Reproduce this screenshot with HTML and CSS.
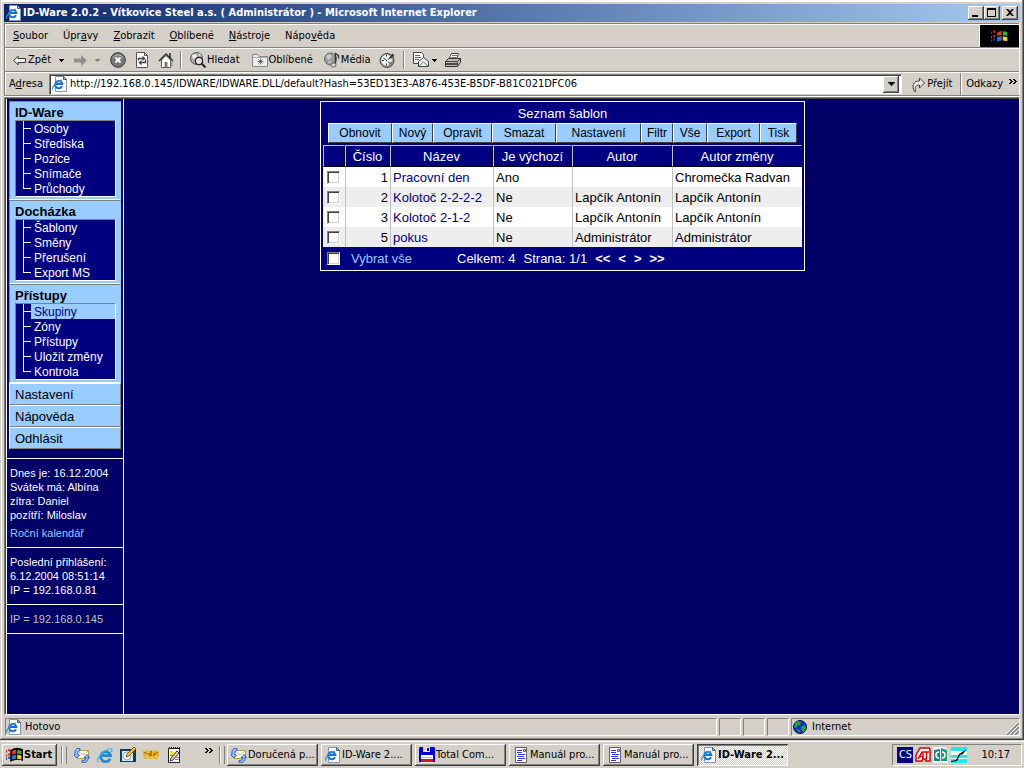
FILE: index.html
```html
<!DOCTYPE html>
<html lang="cs">
<head>
    <meta charset="UTF-8">
    <meta name="viewport" content="width=device-width, initial-scale=1.0">
    <title>ID-Ware 2.0.2 - Vítkovice Steel a.s. ( Administrátor )</title>
    <link rel="stylesheet" href="styles.css">
</head>
<body>
    <!-- Shared icons -->
    <svg class="sprite" aria-hidden="true">
        <symbol id="ie" viewBox="0 0 16 16">
            <path d="M3.500.5h8l3 3v12h-11z" fill="#fff" stroke="#8494b4"/>
            <path d="M11.500.5v3h3z" fill="#c8d4e8" stroke="#4a5a7a"/>
            <path d="M10 10.200A3.600 3.600 0 1 1 10.300 8H3.500" fill="none" stroke="#1c6fd4" stroke-width="2"/>
            <path d="M1 13C-1 14 2 6.500 10 4" fill="none" stroke="#2a8fe0" stroke-width="1.200"/>
        </symbol>
        <symbol id="ie-big" viewBox="0 0 16 16">
            <path d="M13.200 11.700A5 5 0 1 1 13.500 8.600H4" fill="none" stroke="#2289d2" stroke-width="2.800"/>
            <path d="M1.500 15C-2 15 3 5 11.500 2 16 .5 15.500 3 14 5" fill="none" stroke="#49b5ee" stroke-width="1.300"/>
        </symbol>
        <symbol id="outlook" viewBox="0 0 16 16">
            <path d="M3.500 3.500h11v8h-11z" fill="#fff" stroke="#c09850"/>
            <path d="M4 4l5 4 5-4" fill="none" stroke="#e0b060"/>
            <path d="M6 1.500C2 1 .5 3 1 7.500L0 8l3 3 2.500-3H4C3.500 5 4 3.500 6 3.500z" fill="#8fc7ff" stroke="#1b3fc8" stroke-width=".8"/>
            <path d="M8 15.500c5 .5 6.500-2 6-5h1.500L13 7.500l-3 3h2c0 2-1 3-4 3z" fill="#8fc7ff" stroke="#1b3fc8" stroke-width=".8"/>
        </symbol>
        <symbol id="doc" viewBox="0 0 16 16">
            <path d="M2.500.5h11v15h-11z" fill="#fff" stroke="#606060"/>
            <path d="M10.500 2.500h2v2h-2z" fill="#ddd" stroke="#606060"/>
            <path d="M4 3h5v1H4zM4 5h5v1H4zM5 7h7v1H5zM4 9h7v1H4zM5 11h7v1H5zM4 13h5v1H4z" fill="#3030e8"/>
        </symbol>
        <symbol id="flag" viewBox="0 0 16 14">
            <path d="M0 3h1v2H0zM0 7h1v2H0zM2 2h2v2H2zM2 6h2v2H2z" fill="#d02020"/>
            <path d="M0 10h1v2H0zM2 9h2v2H2z" fill="#2040c0"/>
            <path d="M4 3c4-3 8-3 12-1v11c-4-2-8-1-12 1z" fill="#000"/>
            <path d="M5.500 4q2-1.500 4-1.400v3.600q-2 0-4 1z" fill="#f03020"/>
            <path d="M10.500 2.700q2 0 4 .8v3.700q-2-.8-4-1z" fill="#30b030"/>
            <path d="M5.500 8.200q2-1 4-1v3.800q-2 0-4 1z" fill="#3070e0"/>
            <path d="M10.500 7.200q2 .2 4 1v3.500q-2-.7-4-.8z" fill="#f8d020"/>
        </symbol>
        <symbol id="caret" viewBox="0 0 5 3">
            <path d="M0 0h5v1H4v1H3v1H2V2H1V1H0z" fill="currentColor"/>
        </symbol>
        <symbol id="chevrons" viewBox="0 0 8 5">
            <path d="M0 0h2v1h1v1h1v1H3v1H2v1H0V4h1V3h1V2H1V1H0zM4 0h2v1h1v1h1v1H7v1H6v1H4V4h1V3h1V2H5V1H4z" fill="#000"/>
        </symbol>
    </svg>

    <div class="window">
        <header class="titlebar">
            <svg class="icon"><use href="#ie"/></svg>
            <h1>ID-Ware 2.0.2 - Vítkovice Steel a.s. ( Administrátor ) - Microsoft Internet Explorer</h1>
            <button class="win-btn" aria-label="Minimalizovat"><svg viewBox="0 0 12 10"><path d="M2 7h6v2H2z"/></svg></button>
            <button class="win-btn" aria-label="Maximalizovat"><svg viewBox="0 0 12 10"><path d="M1 0h9v9H1zM2 2v6h7V2z" fill-rule="evenodd"/></svg></button>
            <button class="win-btn win-close" aria-label="Zavřít"><svg viewBox="0 0 12 10"><path d="M2 1h2l2 2 2-2h2L7 4.500 10 8H8L6 6 4 8H2l3-3.500z"/></svg></button>
        </header>

        <div class="rebar">
            <div class="bar menubar">
                <nav class="menu">
                    <button><u>S</u>oubor</button>
                    <button>Úpr<u>a</u>vy</button>
                    <button><u>Z</u>obrazit</button>
                    <button><u>O</u>blíbené</button>
                    <button><u>N</u>ástroje</button>
                    <button>Nápo<u>v</u>ěda</button>
                </nav>
                <div class="throbber"><svg width="18" height="16"><use href="#flag"/></svg></div>
            </div>

            <div class="bar toolbar">
                <button class="tool back">
                    <svg width="13" height="11" viewBox="0 0 13 11"><path d="M.7 5.500L5 1.200v2.300h7.500v4H5v2.300z" fill="#eee" stroke="#333"/></svg>
                    Zpět
                </button>
                <button class="tool drop" aria-label="Historie zpět"><svg class="caret"><use href="#caret"/></svg></button>
                <button class="tool" aria-label="Vpřed">
                    <svg width="13" height="11" viewBox="0 0 13 11"><path d="M0 3.500h7V0l6 5.500L7 11V7.500H0z" fill="#909090"/></svg>
                </button>
                <button class="tool drop off" aria-label="Historie vpřed"><svg class="caret"><use href="#caret"/></svg></button>
                <button class="tool" aria-label="Zastavit">
                    <svg class="icon" viewBox="0 0 16 16"><circle cx="8" cy="8" r="7.300" fill="#777" stroke="#333"/><path d="M3 6a5.500 5.500 0 0 1 10 0" fill="none" stroke="#bbb"/><path d="M5.500 5.500l5 5m0-5l-5 5" stroke="#fff" stroke-width="1.800"/></svg>
                </button>
                <button class="tool" aria-label="Aktualizovat">
                    <svg class="icon" viewBox="0 0 16 16"><path d="M2.500.5h8l3 3v12h-11z" fill="#fff" stroke="#555"/><path d="M10.500.5v3h3" fill="none" stroke="#555"/><path d="M4.500 8.500V6.500h5M11.500 7.500v3h-5" fill="none" stroke="#444" stroke-width="1.400"/><path d="M8.500 3.500l3 3-3 2.500zM7.500 8l-3 2.500 3 3z" fill="#444"/></svg>
                </button>
                <button class="tool" aria-label="Domů">
                    <svg class="icon" viewBox="0 0 16 16"><path d="M11 1h2v5h-2z" fill="#555"/><path d="M3.500 8v7.500h9V8L8 3.500z" fill="#fff" stroke="#555"/><path d="M1 9l7-7 7 7" fill="none" stroke="#333" stroke-width="1.500"/><path d="M6.500 10h3v5.500h-3z" fill="#777"/><path d="M12.500 9l2 1v4l-2 1.500z" fill="#999"/></svg>
                </button>
                <span class="sep"></span>
                <button class="tool">
                    <svg class="icon" viewBox="0 0 16 16"><circle cx="6.500" cy="6.500" r="6" fill="#a8a8a8" stroke="#555"/><path d="M2 3l4-1 1 3-4 2zM8 1l3 2-1 2" fill="#eee"/><circle cx="9" cy="9" r="3.600" fill="#e4e4e4" stroke="#222" stroke-width="1.300"/><path d="M11.500 11.500l4 4" stroke="#222" stroke-width="2"/></svg>
                    Hledat
                </button>
                <button class="tool favs">
                    <svg class="icon" viewBox="0 0 16 16"><path d="M.5 14.500v-12h5l1.500 2h8.500v10z" fill="#eee" stroke="#888"/><path d="M1 5.500h14" stroke="#aaa"/><path d="M8.500 6.500v6M5.500 9.500h6M6.500 7.500l4 4M10.500 7.500l-4 4" stroke="#555" stroke-width=".8"/></svg>
                    Oblíbené
                </button>
                <button class="tool">
                    <svg class="icon" viewBox="0 0 16 16"><circle cx="6.500" cy="7" r="6" fill="#9a9a9a" stroke="#666"/><path d="M2 4l4-2 2 3-4 3zM4 9l3 0-1 3z" fill="#ccc"/><path d="M11.500 12V1.500l3 2v3" fill="none" stroke="#333" stroke-width="1.300"/><ellipse cx="9.500" cy="13" rx="2.500" ry="2" fill="#ddd" stroke="#666"/></svg>
                    Média
                </button>
                <button class="tool history" aria-label="Historie">
                    <svg class="icon" viewBox="0 0 16 16"><circle cx="8" cy="8.500" r="7" fill="#999" stroke="#444"/><circle cx="7.500" cy="8" r="5.200" fill="#f4f4f4"/><path d="M8 8.500l5.500-7L15.500 4z" fill="#333"/><path d="M8 9l6 2-2 3z" fill="#777"/><path d="M8 9L4.500 6M7.500 3v1.500M3 8.500h2M7.500 11.500v1.500" stroke="#333"/></svg>
                </button>
                <span class="sep"></span>
                <button class="tool mail" aria-label="Pošta">
                    <svg class="icon" viewBox="0 0 16 16"><path d="M.5.5h8l2 2v9H.5z" fill="#fff" stroke="#444"/><path d="M2 3.500h5M2 5.500h6M2 7.500h4" stroke="#666"/><path d="M5.500 14.500V9.500l5-4 5 4v5z" fill="#f0f0f0" stroke="#444"/><path d="M6 14l4.500-4 4.500 4" fill="none" stroke="#777"/></svg>
                    <svg class="caret"><use href="#caret"/></svg>
                </button>
                <button class="tool" aria-label="Tisk">
                    <svg class="icon" viewBox="0 0 16 16"><path d="M4 7L6.500 1.500h7L11.500 7" fill="#fff" stroke="#444"/><path d="M7 3.500h5M6 5.500h5" stroke="#777"/><path d="M.5 9.500l3-3h12v4l-3 4H.5z" fill="#bbb" stroke="#333"/><path d="M1 9.500h11.500l3-3M12.500 9.500v5" fill="none" stroke="#444"/><path d="M1 12h11" stroke="#222" stroke-width="1.500"/></svg>
                </button>
            </div>

            <div class="bar addressbar">
                <label for="address">A<u>d</u>resa</label>
                <div class="combo">
                    <svg class="icon"><use href="#ie"/></svg>
                    <input id="address" type="text" value="http://192.168.0.145/IDWARE/IDWARE.DLL/default?Hash=53ED13E3-A876-453E-B5DF-B81C021DFC06">
                    <button class="combo-btn" aria-label="Rozbalit"><svg width="7" height="4"><use href="#caret"/></svg></button>
                </div>
                <button class="tool go">
                    <svg width="13" height="15" viewBox="0 0 13 15"><path d="M2.500 14.500C-.5 9 1 4 7.500 4V1l5 5-5 5V8C4 8 2.500 10 3.500 14.500z" fill="#e8e8e8" stroke="#444"/></svg>
                    Přejít
                </button>
                <span class="bar-split"></span>
                <button class="tool links">Odkazy <svg width="8" height="5"><use href="#chevrons"/></svg></button>
            </div>
        </div>

        <div class="view">
            <aside class="sidebar">
                <nav class="groups">
                    <section class="group">
                        <h2>ID-Ware</h2>
                        <ul>
                            <li><a href="#">Osoby</a></li>
                            <li><a href="#">Střediska</a></li>
                            <li><a href="#">Pozice</a></li>
                            <li><a href="#">Snímače</a></li>
                            <li><a href="#">Průchody</a></li>
                        </ul>
                    </section>
                    <section class="group">
                        <h2>Docházka</h2>
                        <ul>
                            <li><a href="#">Šablony</a></li>
                            <li><a href="#">Směny</a></li>
                            <li><a href="#">Přerušení</a></li>
                            <li><a href="#">Export MS</a></li>
                        </ul>
                    </section>
                    <section class="group">
                        <h2>Přístupy</h2>
                        <ul>
                            <li><a href="#" class="active">Skupiny</a></li>
                            <li><a href="#">Zóny</a></li>
                            <li><a href="#">Přístupy</a></li>
                            <li><a href="#">Uložit změny</a></li>
                            <li><a href="#">Kontrola</a></li>
                        </ul>
                    </section>
                    <a href="#" class="nav-btn">Nastavení</a>
                    <a href="#" class="nav-btn">Nápověda</a>
                    <a href="#" class="nav-btn">Odhlásit</a>
                </nav>
                <div class="info">
                    <p>Dnes je: 16.12.2004</p>
                    <p>Svátek má: Albína</p>
                    <p>zítra: Daniel</p>
                    <p>pozítří: Miloslav</p>
                    <a href="#">Roční kalendář</a>
                </div>
                <div class="info">
                    <p>Poslední přihlášení:</p>
                    <p>6.12.2004 08:51:14</p>
                    <p>IP = 192.168.0.81</p>
                </div>
                <div class="info info-ip">
                    <p>IP = 192.168.0.145</p>
                </div>
            </aside>

            <main class="content">
                <form class="panel">
                    <h2>Seznam šablon</h2>
                    <div class="actions">
                        <button type="button">Obnovit</button>
                        <button type="button">Nový</button>
                        <button type="button">Opravit</button>
                        <button type="button">Smazat</button>
                        <button type="button">Nastavení</button>
                        <button type="button">Filtr</button>
                        <button type="button">Vše</button>
                        <button type="button">Export</button>
                        <button type="button">Tisk</button>
                    </div>
                    <table>
                        <colgroup>
                            <col class="c-check"><col class="c-num"><col class="c-name"><col class="c-default"><col class="c-author"><col class="c-changed">
                        </colgroup>
                        <thead>
                            <tr><th></th><th>Číslo</th><th>Název</th><th>Je výchozí</th><th>Autor</th><th>Autor změny</th></tr>
                        </thead>
                        <tbody>
                            <tr><td><input type="checkbox" aria-label="Pracovní den"></td><td class="num">1</td><td><a href="#">Pracovní den</a></td><td>Ano</td><td></td><td>Chromečka Radvan</td></tr>
                            <tr><td><input type="checkbox" aria-label="Kolotoč 2-2-2-2"></td><td class="num">2</td><td><a href="#">Kolotoč 2-2-2-2</a></td><td>Ne</td><td>Lapčík Antonín</td><td>Lapčík Antonín</td></tr>
                            <tr><td><input type="checkbox" aria-label="Kolotoč 2-1-2"></td><td class="num">3</td><td><a href="#">Kolotoč 2-1-2</a></td><td>Ne</td><td>Lapčík Antonín</td><td>Lapčík Antonín</td></tr>
                            <tr><td><input type="checkbox" aria-label="pokus"></td><td class="num">5</td><td><a href="#">pokus</a></td><td>Ne</td><td>Administrátor</td><td>Administrátor</td></tr>
                        </tbody>
                    </table>
                    <div class="panel-foot">
                        <input type="checkbox" id="all">
                        <label for="all">Vybrat vše</label>
                        <div class="pager">
                            <span>Celkem: 4</span>
                            <span>Strana: 1/1</span>
                            <a href="#">&lt;&lt;</a>
                            <a href="#">&lt;</a>
                            <a href="#">&gt;</a>
                            <a href="#">&gt;&gt;</a>
                        </div>
                    </div>
                </form>
            </main>
        </div>

        <footer class="statusbar">
            <div class="cell cell-main"><svg class="icon"><use href="#ie"/></svg>Hotovo</div>
            <div class="cell"></div>
            <div class="cell"></div>
            <div class="cell"></div>
            <div class="cell cell-zone">
                <svg width="14" height="14" viewBox="0 0 14 14"><circle cx="7" cy="7" r="6.500" fill="#1432c0" stroke="#001050"/><path d="M2 3l3-2 3 1-1 3-3 1-1 2-2-1zM8 7l4-2 1 3-2 4-2-1zM4 9l3 1-1 3z" fill="#22a83a"/></svg>
                Internet
                <svg class="grip" width="13" height="13" viewBox="0 0 13 13"><path d="M1 13L13 1M5 13l8-8M9 13l4-4" stroke="#808080" stroke-width="1.500"/><path d="M0 12L12 0M4 12l8-8M8 12l4-4" stroke="#fff"/></svg>
            </div>
        </footer>
    </div>

    <div class="taskbar">
        <button class="task start"><svg width="17" height="15"><use href="#flag"/></svg>Start</button>
        <span class="sep"></span>
        <div class="quick">
            <button aria-label="Outlook"><svg class="icon"><use href="#outlook"/></svg></button>
            <button aria-label="Internet Explorer"><svg class="icon"><use href="#ie-big"/></svg></button>
            <button aria-label="Plocha"><svg class="icon" viewBox="0 0 16 16"><path d="M0 2h16v13H0z" fill="#123a5c"/><path d="M2 4h11v10H2z" fill="#d8ecf4"/><circle cx="7" cy="9" r="4" fill="#fff" stroke="#8ab"/><path d="M6 10l1-3 7-7 2 2-7 7z" fill="#f0c040" stroke="#604000" stroke-width=".8"/></svg></button>
            <button aria-label="Správce"><svg class="icon" viewBox="0 0 16 16"><path d="M0 3l2 1.500L4 3l2 1.500L8 3l2 1.500L12 3l2 1.500L16 3v5l-2 4h-3l-1-3-1 3H6L5 9l-1 3H2L0 8z" fill="#e0b818"/><path d="M1.500 5l2 2M5.500 6l1.500 3M8 4v5M10.500 9L12 6M14.500 5l-2 2" stroke="#c02010"/><path d="M2 9h2v1H2zM7 10h1v1H7zM12 9h2v1h-2z" fill="#fff3a0"/></svg></button>
            <button aria-label="Poznámky"><svg class="icon" viewBox="0 0 16 16"><path d="M2.500 1.500h11v14h-11z" fill="#fff" stroke="#222"/><path d="M3 1h11" stroke="#222" stroke-width="2" stroke-dasharray="1 1"/><path d="M4 4h4v4H4z" fill="#f8e820"/><path d="M4 8h3v1H4zM9 12h4v1H9zM10 10h3v1h-3z" fill="#40a0a0"/><path d="M4 14l1-3 6-7 2 2-6 7z" fill="#f4e020" stroke="#2030c0"/></svg></button>
        </div>
        <button class="more" aria-label="Další"><svg width="8" height="5"><use href="#chevrons"/></svg></button>
        <span class="sep"></span>
        <div class="tasks">
            <button class="task"><svg class="icon"><use href="#outlook"/></svg>Doručená p...</button>
            <button class="task"><svg class="icon"><use href="#ie"/></svg>ID-Ware 2....</button>
            <button class="task"><svg class="icon" viewBox="0 0 16 16"><path d="M1 0h14l1 1v14H0V1z" fill="#0000d8"/><path d="M4 0h7v5H4z" fill="#e0e0e0"/><path d="M8 1h2v3H8z" fill="#0000a0"/><path d="M2 8h12v8H2z" fill="#fff"/><path d="M3 10h10v1H3z" fill="#bbb"/><path d="M2 12h12v3H2z" fill="#e01010"/></svg>Total Com...</button>
            <button class="task"><svg class="icon"><use href="#doc"/></svg>Manuál pro...</button>
            <button class="task"><svg class="icon"><use href="#doc"/></svg>Manuál pro...</button>
            <button class="task pressed"><svg class="icon"><use href="#ie"/></svg>ID-Ware 2...</button>
        </div>
        <div class="tray">
            <span class="lang">CS</span>
            <svg class="icon" viewBox="0 0 16 16"><path d="M5 1h9l1 1v12h-4v-2H8l-1 2H1v-6z" fill="#fff" stroke="#d80000" stroke-width="1.500"/><path d="M3 12l4-7h1v7M4.500 9.500h3M9 5h5M11.500 5v7" fill="none" stroke="#d80000" stroke-width="1.500"/></svg>
            <svg class="icon" viewBox="0 0 16 16"><path d="M0 0h12l3 3v13H0z" fill="#f8f8f8"/><path d="M1 3l6-1v12H1z" fill="#10888a"/><path d="M8 1l6 2v11H8z" fill="#10a078"/><path d="M6 5a3 3 0 0 0 0 6M9 5a3 3 0 0 1 0 6" fill="none" stroke="#fff" stroke-width="1.500"/></svg>
            <svg class="icon" viewBox="0 0 16 16"><path d="M0 0h16v16H0z" fill="#20e8f0"/><path d="M0 4h16v4H0z" fill="#fff"/><path d="M0 11h16v1H0z" fill="#fff"/><path d="M0 14l5-1 3-6 8-5-4 5-3 1-3 6-6 1z" fill="#111"/></svg>
            <time>10:17</time>
        </div>
    </div>
</body>
</html>
```

FILE: styles.css
```css
* {
    box-sizing: border-box;
}
html, body {
    height: 100%;
}
body {
    display: flex;
    flex-direction: column;
    margin: 0;
    background: #d4d0c8;
    color: #000;
    font: 11px/14px "DejaVu Sans Condensed", "DejaVu Sans", sans-serif;
    overflow: hidden;
}
h1, h2, p, ul {
    margin: 0;
    padding: 0;
}
a {
    color: inherit;
    text-decoration: none;
}
button {
    font: inherit;
    color: inherit;
    background: none;
    border: 0;
    padding: 0;
    white-space: nowrap;
}
svg {
    flex: none;
    display: block;
}
.sprite {
    display: none;
}
.icon {
    width: 16px;
    height: 16px;
}
.caret {
    width: 5px;
    height: 3px;
}

/* Browser window */
.window {
    flex: 1;
    min-height: 0;
    display: flex;
    flex-direction: column;
    padding: 4px;
    box-shadow: inset -1px -1px #404040, inset 1px 0 #d4d0c8, inset -2px -2px #808080, inset 2px 2px #fff;
}
.titlebar {
    display: flex;
    align-items: center;
    height: 18px;
    padding-right: 2px;
    background: linear-gradient(to right, #0a246a, #a6caf0);
    color: #fff;
}
.titlebar .icon {
    margin: 0 1px 0 2px;
}
.titlebar h1 {
    flex: 1;
    font-size: 11px;
    font-weight: bold;
    white-space: nowrap;
}
.win-btn {
    width: 16px;
    height: 14px;
    padding: 2px;
    background: #d4d0c8;
    box-shadow: inset -1px -1px #404040, inset 1px 1px #fff, inset -2px -2px #808080;
}
.win-close {
    margin-left: 2px;
}

/* Bars */
.rebar {
    margin-top: 1px;
    border-left: 1px solid #808080;
    border-right: 1px solid #fff;
    border-bottom: 1px solid #808080;
    box-shadow: 0 1px #fff;
}
.bar {
    display: flex;
    align-items: center;
    height: 24px;
    border-top: 1px solid #808080;
    box-shadow: inset 1px 1px #fff;
    padding-top: 1px;
}
.menu {
    flex: 1;
    display: flex;
    gap: 15px;
    padding-left: 8px;
}
.throbber {
    display: flex;
    align-items: center;
    justify-content: center;
    align-self: stretch;
    width: 40px;
    background: #000;
    border-left: 1px solid #fff;
}
.toolbar {
    gap: 8px;
    padding-left: 8px;
}
.tool {
    display: flex;
    align-items: center;
    gap: 1px;
}
.back {
    gap: 2px;
}
.drop {
    width: 7px;
}
.off {
    color: #808080;
}
.favs {
    padding: 0 3px 0 4px;
}
.history {
    padding-right: 2px;
}
.mail {
    gap: 3px;
}
.sep {
    width: 2px;
    height: 18px;
    border-left: 1px solid #808080;
    border-right: 1px solid #fff;
}
.toolbar .sep {
    margin-left: -2px;
}
.addressbar label {
    width: 44px;
    padding-left: 4px;
}
.combo {
    flex: 1;
    display: flex;
    align-items: center;
    height: 21px;
    padding: 2px;
    background: #fff;
    border: 1px solid #808080;
    border-right-color: #fff;
    border-bottom-color: #d4d0c8;
    box-shadow: inset 1px 1px #404040;
}
.combo input {
    flex: 1;
    min-width: 0;
    padding: 0 3px 0 2px;
    border: 0;
    outline: 0;
    font: inherit;
}
.combo-btn {
    display: flex;
    align-items: center;
    justify-content: center;
    width: 16px;
    height: 17px;
    background: #d4d0c8;
    box-shadow: inset -1px -1px #404040, inset 1px 1px #fff, inset -2px -2px #808080;
}
.go {
    gap: 2px;
    padding: 0 8px 0 10px;
}
.bar-split {
    align-self: stretch;
    width: 2px;
    border-left: 1px solid #808080;
    border-right: 1px solid #fff;
}
.links {
    gap: 6px;
    padding: 0 2px 0 4px;
}
.links svg {
    margin-bottom: 6px;
}

/* Page */
.view {
    flex: 1;
    min-height: 0;
    display: flex;
    margin-top: 1px;
    border: 1px solid #fff;
    border-top: 1px solid #808080;
    border-left: 1px solid #808080;
    box-shadow: inset 1px 1px #404040;
    padding: 1px 0 0 1px;
    background: #000066;
    background-clip: content-box;
    font-family: "Liberation Sans", Arial, sans-serif;
}
.sidebar {
    width: 118px;
    border-left: 1px solid #fff;
    border-right: 1px solid #fff;
    color: #fff;
}
.groups {
    margin-bottom: 9px;
    padding: 2px 2px 0;
    color: #000;
}
.group {
    padding: 0 4px 2px 5px;
    background: #99ccff;
    border: 1px solid #808080;
    border-right-color: #99ccff;
    border-bottom-color: #fff;
}
.group h2 {
    height: 18px;
    font-size: 13px;
    line-height: 22px;
}
.group ul {
    list-style: none;
    background: #000080;
    border: 1px solid #fff;
    border-top-color: #808080;
    border-left-color: #808080;
}
.group li {
    height: 15px;
    padding-left: 15px;
    background:
        linear-gradient(#fff, #fff) 7px 0 / 1px 100% no-repeat,
        linear-gradient(#fff, #fff) 7px 7px / 8px 1px no-repeat;
}
.group li:last-child {
    background-size: 1px 8px, 8px 1px;
}
.group a {
    display: block;
    height: 15px;
    padding-left: 3px;
    font-size: 12px;
    line-height: 17px;
    color: #fff;
    white-space: nowrap;
}
.group a.active {
    background: #99ccff;
    color: #000080;
}
.nav-btn {
    display: block;
    height: 22px;
    padding-left: 5px;
    background: #99ccff;
    border: 1px solid #fff;
    border-right-color: #808080;
    border-bottom-color: #808080;
    font-size: 13px;
    line-height: 21px;
}
.info {
    padding: 7px 3px;
    border-top: 1px solid #fff;
    white-space: nowrap;
}
.info a {
    display: block;
    margin-top: 4px;
    color: #99ccff;
}
.info-ip {
    border-bottom: 1px solid #fff;
    color: #c0c0c0;
}
.content {
    flex: 1;
    padding: 2px 18px 0 0;
    font-size: 13px;
}
.panel {
    width: fit-content;
    margin: 0 auto;
    padding: 2px;
    background: #000080;
    border: 1px solid #fff;
    color: #fff;
}
.panel h2 {
    font-size: 13px;
    font-weight: normal;
    line-height: 19px;
    text-align: center;
}
.actions {
    display: grid;
    grid-template-columns: 64px 41px 59px 64px 85px 32px 34px 53px 37px;
    justify-content: center;
    margin-bottom: 2px;
}
.actions button {
    height: 20px;
    background: #99ccff;
    color: #000;
    border: 1px solid #fff;
    border-right-color: #404040;
    border-bottom-color: #404040;
    font-size: 12px;
}
table {
    table-layout: fixed;
    width: 479px;
    border-collapse: separate;
    border-spacing: 0;
    background: #fff;
    color: #000;
}
.c-check { width: 22px; }
.c-num { width: 45px; }
.c-name { width: 103px; }
.c-default { width: 79px; }
.c-author { width: 100px; }
th {
    height: 22px;
    padding: 2px 0 0;
    background: #000080;
    color: #fff;
    font-weight: normal;
    border: 1px solid #c0c0c0;
    border-right-color: #000;
    border-bottom-color: #000;
}
td {
    height: 20px;
    padding: 2px 2px 0;
    border-left: 1px solid #c0c0c0;
    white-space: nowrap;
}
td:first-child {
    padding: 0 3px;
    border-left-color: transparent;
}
tbody tr:nth-child(even) {
    background: #eee;
}
td a {
    color: #000080;
}
.num {
    text-align: right;
}
input[type="checkbox"] {
    appearance: none;
    display: block;
    width: 13px;
    height: 13px;
    margin: 0;
    background: #fff;
    border: 1px solid #808080;
    border-right-color: #fff;
    border-bottom-color: #fff;
    box-shadow: inset 1px 1px #404040, inset -1px -1px #d4d0c8;
}
.panel-foot {
    display: flex;
    align-items: center;
    height: 21px;
    padding: 2px 4px 0;
}
.panel-foot label {
    width: 107px;
    padding-left: 11px;
    color: #99ccff;
}
.pager {
    display: flex;
    gap: 8px;
    padding-left: 10px;
}
.pager a {
    font-weight: bold;
}

/* Status bar */
.statusbar {
    display: flex;
    gap: 2px;
    margin-top: 3px;
    padding-left: 1px;
}
.cell {
    display: flex;
    align-items: center;
    width: 22px;
    height: 18px;
    border: 1px solid #fff;
    border-top-color: #808080;
    border-left-color: #808080;
}
.cell-main {
    flex: 1;
    gap: 3px;
}
.cell-zone {
    width: 229px;
    gap: 5px;
    padding-left: 1px;
}
.grip {
    margin-left: auto;
    align-self: flex-end;
}

/* Taskbar */
.taskbar {
    display: flex;
    align-items: center;
    height: 28px;
    padding: 2px;
    border-top: 1px solid #d4d0c8;
    box-shadow: inset 0 1px #fff;
}
.task {
    display: flex;
    align-items: center;
    gap: 1px;
    width: 91px;
    height: 22px;
    padding: 0 4px;
    box-shadow: inset -1px -1px #404040, inset 1px 1px #fff, inset -2px -2px #808080;
    overflow: hidden;
}
.start {
    width: 55px;
    font-weight: bold;
}
.taskbar .sep {
    width: 6px;
    margin-left: 4px;
    border-right-color: #808080;
    box-shadow: inset 1px 0 #fff;
}
.quick {
    display: flex;
    gap: 7px;
    padding-left: 7px;
}
.more {
    width: 8px;
    margin: 0 2px 8px 23px;
}
.tasks {
    flex: 1;
    display: flex;
    gap: 3px;
    padding-left: 2px;
}
.pressed {
    font-weight: bold;
    background: repeating-conic-gradient(#fff 0 25%, #d4d0c8 0 50%) 0 0 / 2px 2px;
    box-shadow: inset 1px 1px #404040, inset -1px -1px #fff, inset 2px 2px #808080;
}
.tray {
    display: flex;
    align-items: center;
    gap: 2px;
    height: 22px;
    padding: 0 11px 0 4px;
    border: 1px solid #fff;
    border-top-color: #808080;
    border-left-color: #808080;
}
.lang {
    width: 16px;
    height: 16px;
    background: #000080;
    color: #fff;
    line-height: 16px;
    text-align: center;
}
.tray time {
    margin-left: 12px;
}
```
